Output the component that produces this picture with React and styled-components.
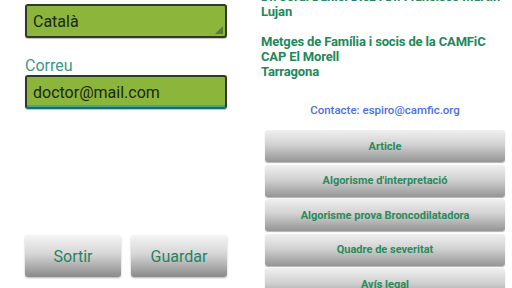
import React from "react";
import styled, { createGlobalStyle } from "styled-components";

const Global = createGlobalStyle`
  html, body { margin: 0; padding: 0; background: #ffffff; }
  body { font-family: Roboto, "Noto Sans", "Liberation Sans", sans-serif; }
  * { box-sizing: border-box; }
`;

const Screen = styled.div`
  width: 512px;
  height: 288px;
  overflow: hidden;
  display: grid;
  grid-template-columns: 256px 256px;
  background: #fff;
`;

const LeftColumn = styled.div`
  display: flex;
  flex-direction: column;
  height: 288px;
  padding: 0 29px 11px 25px;
`;

const Form = styled.div`
  display: flex;
  flex-direction: column;
  margin-top: -15px;
`;

const Label = styled.div`
  font-size: 16px;
  line-height: 19px;
  color: #3a9988;
  margin-top: ${(p) => p.$gap || 0}px;
`;

const Field = styled.div`
  position: relative;
  height: 34px;
  background: #8cb53b;
  border: 2px solid #2e3a26;
  border-radius: 3px;
  ${(p) => p.$focused && `border-bottom-color: #1d6a62;`}
  display: flex;
  align-items: center;
  padding-left: 6px;
  font-size: 16px;
  color: #1a2812;
  box-shadow: ${(p) => (p.$focused ? "inset 0 -2px 0 #3aa99a, 0 1px 1px rgba(0,0,0,0.25)" : "0 1px 1px rgba(0,0,0,0.25)")};
`;

const Corner = styled.span`
  position: absolute;
  right: 2px;
  bottom: 2px;
  width: 0;
  height: 0;
  border-left: 8px solid transparent;
  border-bottom: 8px solid #5b7a36;
`;

const ButtonRow = styled.div`
  margin-top: auto;
  display: grid;
  grid-template-columns: 96px 96px;
  gap: 10px;
`;

const BigButton = styled.button`
  height: 42px;
  border: none;
  border-radius: 3px;
  background: linear-gradient(#f5f5f5, #d6d6d6 45%, #8a8a8a);
  box-shadow: 0 1px 2px rgba(0, 0, 0, 0.3);
  color: #25835f;
  font-family: Roboto, "Noto Sans", sans-serif;
  font-size: 16px;
  padding: 0;
`;

const RightColumn = styled.div`
  display: flex;
  flex-direction: column;
  padding: 0 7px 0 5px;
  min-width: 0;
`;

const Credits = styled.div`
  margin-top: -11px;
  font-size: 13px;
  line-height: 15px;
  font-weight: 700;
  color: #22875a;
  white-space: nowrap;
  letter-spacing: -0.15px;
`;

const Contact = styled.div`
  margin-top: 24px;
  text-align: center;
  font-size: 11.5px;
  line-height: 15px;
  font-weight: 500;
  color: #4b6fe0;
  padding-left: 4px;
`;

const MenuList = styled.div`
  margin-top: 12px;
  padding-left: 4px;
  display: flex;
  flex-direction: column;
  gap: 2.5px;
`;

const MenuButton = styled.button`
  height: 32px;
  width: 240px;
  border: none;
  border-radius: 3px;
  background: linear-gradient(#f0f0f0, #d2d2d2 45%, #959595);
  box-shadow: 0 1px 1px rgba(0, 0, 0, 0.3);
  color: #2a8a5c;
  font-family: Roboto, "Noto Sans", sans-serif;
  font-weight: 700;
  font-size: 11px;
  padding: 0;
`;

const menu = [
  "Article",
  "Algorisme d'interpretació",
  "Algorisme prova Broncodilatadora",
  "Quadre de severitat",
  "Avís legal",
];

export default function App() {
  return (
    <>
      <Global />
      <Screen>
        <LeftColumn>
          <Form>
            <Label>Idioma</Label>
            <Field>
              Català
              <Corner />
            </Field>
            <Label $gap={18}>Correu</Label>
            <Field $focused>doctor@mail.com</Field>
          </Form>
          <ButtonRow>
            <BigButton>Sortir</BigButton>
            <BigButton>Guardar</BigButton>
          </ButtonRow>
        </LeftColumn>
        <RightColumn>
          <Credits>
            Dr. Jordi Daniel Díez i Dr. Francisco Martín
            <br />
            Lujan
            <br />
            <br />
            Metges de Família i socis de la CAMFiC
            <br />
            CAP El Morell
            <br />
            Tarragona
          </Credits>
          <Contact>Contacte: espiro@camfic.org</Contact>
          <MenuList>
            {menu.map((m) => (
              <MenuButton key={m}>{m}</MenuButton>
            ))}
          </MenuList>
        </RightColumn>
      </Screen>
    </>
  );
}
